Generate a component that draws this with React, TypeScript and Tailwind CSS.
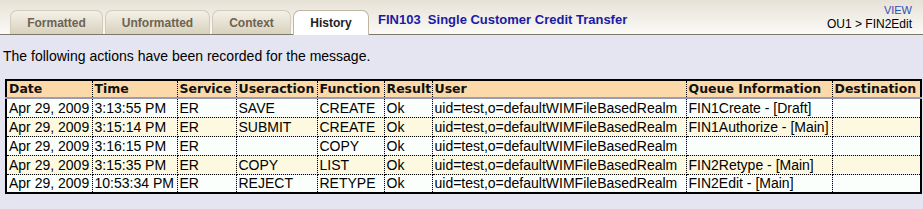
import React from 'react'

const tabs = ['Formatted', 'Unformatted', 'Context', 'History']
const tabWidths = ['w-[93px]', 'w-[105px]', 'w-[79px]', 'w-[76px]']

const columns = [
  { label: 'Date', w: 'w-[86px]' },
  { label: 'Time', w: 'w-[85px]' },
  { label: 'Service', w: 'w-[59px]' },
  { label: 'Useraction', w: 'w-[81px]' },
  { label: 'Function', w: 'w-[67px]' },
  { label: 'Result', w: 'w-[48px]' },
  { label: 'User', w: 'w-[254px]' },
  { label: 'Queue Information', w: 'w-[146px]' },
  { label: 'Destination', w: 'w-[89px]' },
]

const user = 'uid=test,o=defaultWIMFileBasedRealm'

const rows = [
  ['Apr 29, 2009', '3:13:55 PM', 'ER', 'SAVE', 'CREATE', 'Ok', user, 'FIN1Create - [Draft]', ''],
  ['Apr 29, 2009', '3:15:14 PM', 'ER', 'SUBMIT', 'CREATE', 'Ok', user, 'FIN1Authorize - [Main]', ''],
  ['Apr 29, 2009', '3:16:15 PM', 'ER', '', 'COPY', 'Ok', user, '', ''],
  ['Apr 29, 2009', '3:15:35 PM', 'ER', 'COPY', 'LIST', 'Ok', user, 'FIN2Retype - [Main]', ''],
  ['Apr 29, 2009', '10:53:34 PM', 'ER', 'REJECT', 'RETYPE', 'Ok', user, 'FIN2Edit - [Main]', ''],
]

export default function App() {
  const active = 'History'

  return (
    <div className="w-[923px] h-[209px] bg-[#e5e5f1] font-['Liberation_Sans',Arial,sans-serif] overflow-hidden">
      {/* Header with tabs */}
      <div className="h-[35px] flex items-end justify-between border-b border-[#7d786c] bg-gradient-to-b from-[#e6e2d6] to-[#fbfaf7] pl-[10px] pr-[11px]">
        <div className="flex items-end gap-[2px]">
          {tabs.map((t, i) => (
            <div
              key={t}
              className={
                t === active
                  ? `${tabWidths[i]} h-[25px] -mb-px rounded-t-[7px] border border-b-0 border-[#bdb6a2] bg-white flex items-center justify-center text-[12px] font-bold text-[#222]`
                  : `${tabWidths[i]} h-[24px] rounded-t-[7px] border border-b-0 border-[#d2cbb7] bg-gradient-to-b from-[#f4f1e8] to-[#d8d1bd] flex items-center justify-center text-[12px] font-bold text-[#6d6352]`
              }
            >
              {t}
            </div>
          ))}
          <div className="ml-[7px] mb-[5px] text-[13px] font-bold text-[#1a1aa6] whitespace-pre">
            FIN103  Single Customer Credit Transfer
          </div>
        </div>
        <div className="flex flex-col items-end mb-[3px] leading-[14px]">
          <span className="text-[11px] text-[#2f4fb5]">VIEW</span>
          <span className="text-[12px] text-black">OU1 &gt; FIN2Edit</span>
        </div>
      </div>

      <p className="mt-[13px] ml-[3px] text-[14px] leading-[16px] text-black">
        The following actions have been recorded for the message.
      </p>

      <table className="w-[916px] mt-[15px] ml-[5px] border-collapse border-2 border-black text-[14px] leading-[16px] table-fixed">
        <thead>
          <tr className="bg-[#fcd9a9] border-b-2 border-[#9a9ab9]">
            {columns.map((c) => (
              <th
                key={c.label}
                className={`${c.w} h-[17px] px-[2px] py-0 text-left font-bold text-[12.5px] text-[#111] border-x border-dotted border-black font-['DejaVu_Sans',Verdana,sans-serif] whitespace-nowrap overflow-hidden`}
              >
                {c.label}
              </th>
            ))}
          </tr>
        </thead>
        <tbody>
          {rows.map((r, ri) => (
            <tr key={ri} className={ri % 2 === 0 ? 'bg-[#fbfffb]' : 'bg-[#fdf8e0]'}>
              {r.map((cell, ci) => (
                <td
                  key={ci}
                  className="h-[19px] px-[2px] py-0 border border-dotted border-black text-black whitespace-nowrap overflow-hidden"
                >
                  {cell}
                </td>
              ))}
            </tr>
          ))}
        </tbody>
      </table>
    </div>
  )
}
